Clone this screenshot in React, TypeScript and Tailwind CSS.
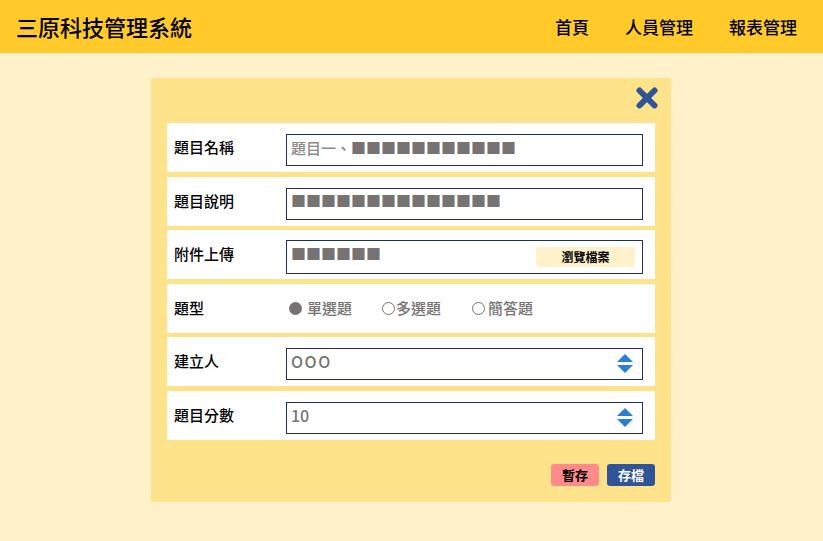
import React from "react";

const font = { fontFamily: '"Noto Sans CJK TC", "Noto Sans", sans-serif' };

function Spinner() {
  return (
    <svg width="16" height="20" viewBox="0 0 16 20" className="mr-[9px]">
      <polygon points="8,0 16,8 0,8" fill="#2a7fd2" />
      <polygon points="0,11 16,11 8,19" fill="#2a7fd2" />
    </svg>
  );
}

function Row({ label, children }: { label: string; children: React.ReactNode }) {
  return (
    <div className="flex h-[49px] items-center bg-white pl-[7px] pr-[12px]">
      <div className="w-[112px] text-[15px] font-medium text-black">{label}</div>
      <div className="flex-1">{children}</div>
    </div>
  );
}

function Box({ children, h = "h-[32px]" }: { children: React.ReactNode; h?: string }) {
  return (
    <div className={`mt-[5px] flex ${h} items-center justify-between border border-[#1f3050] pl-[4px] text-[15px] font-medium text-[#777373]`}>
      {children}
    </div>
  );
}

const sq = (n: number) => "■".repeat(n);

export default function App() {
  return (
    <div className="min-h-screen bg-[#fff2cb]" style={font}>
      <header className="flex h-[53px] items-center justify-between bg-[#ffca2a] pl-[16px] pr-[26px]">
        <div className="text-[22px] font-medium text-black">三原科技管理系統</div>
        <nav className="flex gap-[36px] text-[17px] font-medium text-black">
          <span>首頁</span>
          <span>人員管理</span>
          <span>報表管理</span>
        </nav>
      </header>
      <div className="flex justify-center pr-[1px] pt-[25px]">
        <div className="w-[520px] bg-[#ffe38b] px-[16px] pb-[16px]">
          <div className="flex justify-end pt-[9px]">
            <svg width="22" height="22" viewBox="0 0 22 22" className="mr-[-3px]">
              <line x1="3.5" y1="3.5" x2="18.5" y2="18.5" stroke="#2f5597" strokeWidth="6" strokeLinecap="round" />
              <line x1="18.5" y1="3.5" x2="3.5" y2="18.5" stroke="#2f5597" strokeWidth="6" strokeLinecap="round" />
            </svg>
          </div>
          <div className="mt-[14px] flex flex-col gap-[4.5px]">
            <Row label="題目名稱">
              <Box>
                <span className="-mt-[4px]">
                  <span className="text-[#8a8a8a]">題目一、</span>
                  {sq(11)}
                </span>
              </Box>
            </Row>
            <Row label="題目說明">
              <Box>
                <span className="-mt-[4px]">{sq(14)}</span>
              </Box>
            </Row>
            <Row label="附件上傳">
              <Box h="h-[34px]">
                <span className="self-start pt-[2px]">{sq(6)}</span>
                <span className="mr-[7px] flex h-[20px] w-[99px] items-center justify-center rounded-[3px] bg-[#fff2cb] text-[12px] font-bold text-black">
                  瀏覽檔案
                </span>
              </Box>
            </Row>
            <Row label="題型">
              <div className="flex items-center pl-[3px] text-[15px] font-medium text-[#777373]">
                <span className="flex items-center">
                  <span className="mr-[5px] inline-block h-[13px] w-[13px] rounded-full bg-[#777373]"></span>
                  單選題
                </span>
                <span className="ml-[30px] flex items-center">
                  <span className="mr-[1px] inline-block h-[13px] w-[13px] rounded-full border border-[#777373]"></span>
                  多選題
                </span>
                <span className="ml-[31px] flex items-center">
                  <span className="mr-[3px] inline-block h-[13px] w-[13px] rounded-full border border-[#777373]"></span>
                  簡答題
                </span>
              </div>
            </Row>
            <Row label="建立人">
              <Box>
                <span className="self-start text-[16px] tracking-[1.5px]">OOO</span>
                <Spinner />
              </Box>
            </Row>
            <Row label="題目分數">
              <Box>
                <span className="self-start text-[16px]">10</span>
                <Spinner />
              </Box>
            </Row>
          </div>
          <div className="mt-[24px] flex justify-end gap-[8px]">
            <button className="flex h-[22px] w-[48px] items-center justify-center rounded-[3px] bg-[#ff8a8a] text-[13px] font-bold text-black">
              暫存
            </button>
            <button className="flex h-[22px] w-[48px] items-center justify-center rounded-[3px] bg-[#2f5597] text-[13px] font-bold text-white">
              存檔
            </button>
          </div>
        </div>
      </div>
    </div>
  );
}
